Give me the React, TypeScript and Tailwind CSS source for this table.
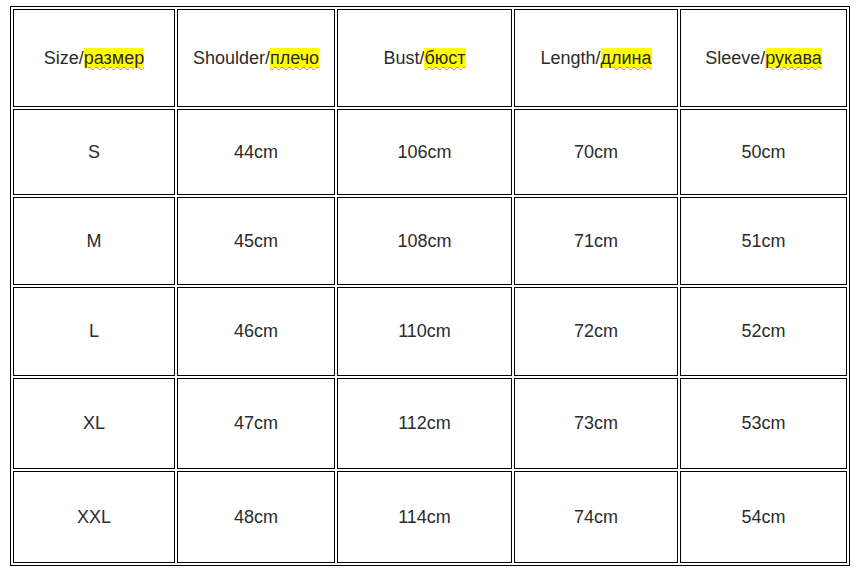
import React from 'react';

interface Header {
  en: string;
  ru: string;
}

const headers: Header[] = [
  { en: 'Size', ru: 'размер' },
  { en: 'Shoulder', ru: 'плечо' },
  { en: 'Bust', ru: 'бюст' },
  { en: 'Length', ru: 'длина' },
  { en: 'Sleeve', ru: 'рукава' },
];

const rows: string[][] = [
  ['S', '44cm', '106cm', '70cm', '50cm'],
  ['M', '45cm', '108cm', '71cm', '51cm'],
  ['L', '46cm', '110cm', '72cm', '52cm'],
  ['XL', '47cm', '112cm', '73cm', '53cm'],
  ['XXL', '48cm', '114cm', '74cm', '54cm'],
];

const Cell: React.FC<{ children: React.ReactNode }> = ({ children }) => (
  <div className="border border-black flex items-center justify-center text-[18px] text-[#2b2b2b]">
    {children}
  </div>
);

const App: React.FC = () => {
  return (
    <div
      className="w-[857px] h-[573px] bg-white pl-[10px] pt-[6px]"
      style={{ fontFamily: '"Liberation Sans", Arial, sans-serif' }}
    >
      {/* Size chart */}
      <div className="inline-grid border border-black p-[2px] gap-[2px] grid-cols-[162px_158px_175px_164px_167px] grid-rows-[98px_86px_88px_89px_91px_92px]">
        {headers.map((h) => (
          <Cell key={h.en}>
            <span>
              {h.en}/
              <span className="bg-[#ffff00] underline decoration-wavy decoration-[#d98a00] decoration-1 underline-offset-2">
                {h.ru}
              </span>
            </span>
          </Cell>
        ))}
        {rows.map((row) =>
          row.map((value, i) => <Cell key={row[0] + i}>{value}</Cell>)
        )}
      </div>
    </div>
  );
};

export default App;
